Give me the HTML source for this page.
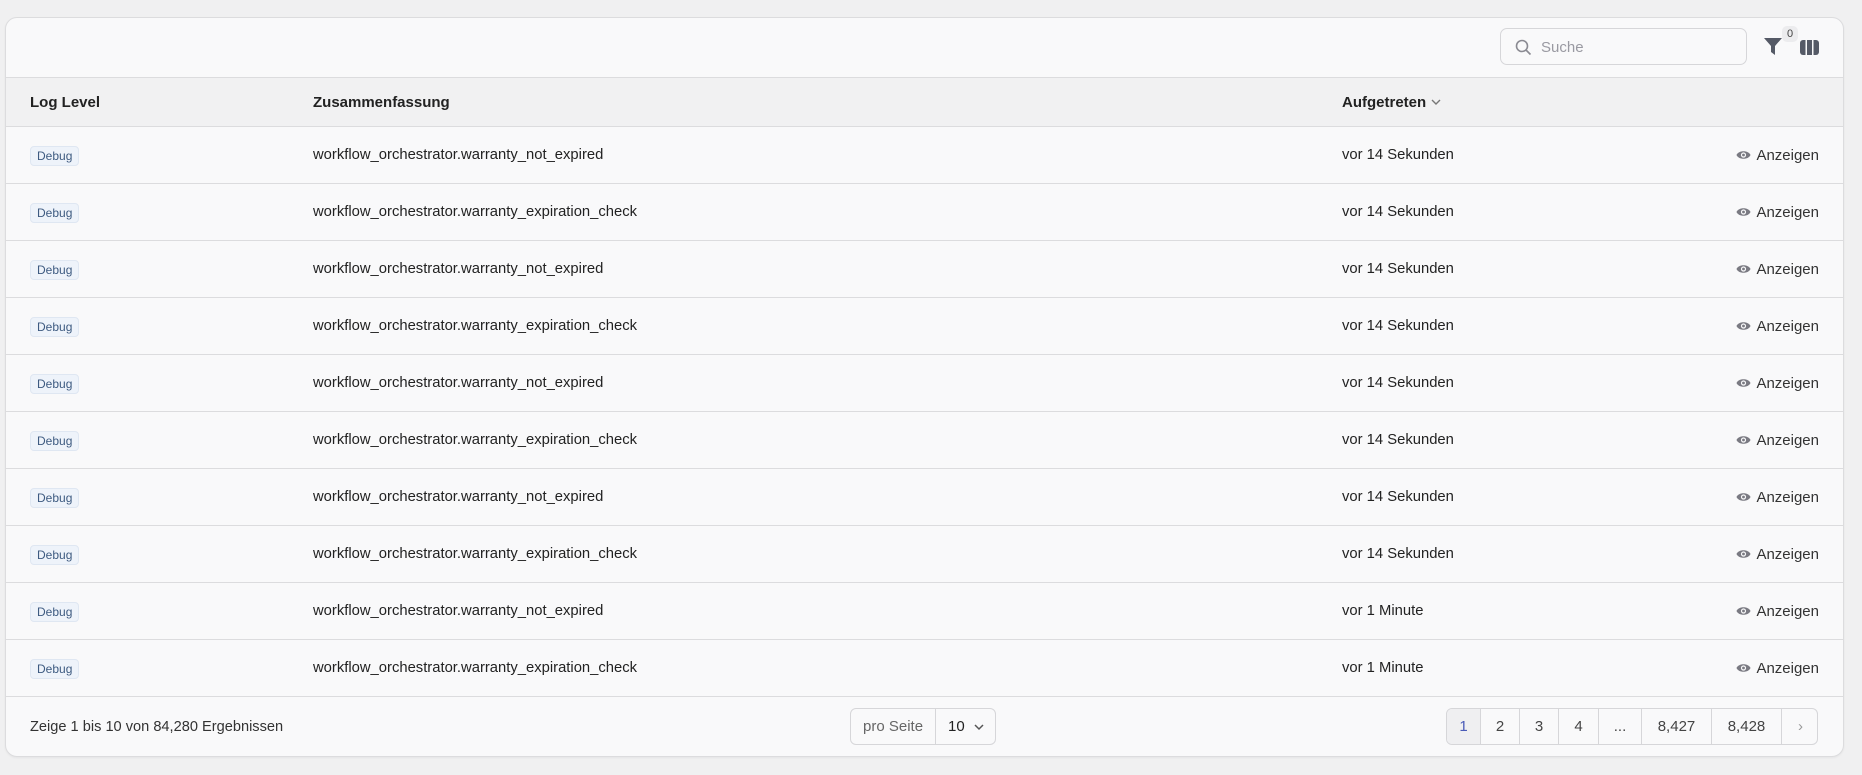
<!DOCTYPE html>
<html><head><meta charset="utf-8"><style>
*{box-sizing:border-box;margin:0;padding:0}
body{width:1862px;height:775px;background:#f0f0f1;font-family:"Liberation Sans",sans-serif;color:#222;position:relative;overflow:hidden}
.card{position:absolute;left:5px;top:17px;width:1839px;height:740px;background:#f9f9fa;border:1px solid #dcdcde;border-radius:12px;overflow:hidden;box-shadow:0 1px 2px rgba(0,0,0,.05)}
.search{position:absolute;left:1494px;top:10px;width:247px;height:37px;border:1px solid #d6d6d9;border-radius:7px;background:#f9f9fa}
.search span{position:absolute;left:40px;top:10px;font-size:15px;color:#9a9aa2}
.hdr{position:absolute;left:0;top:59px;width:100%;height:50px;background:#f1f1f2;border-top:1px solid #dcdcde;border-bottom:1px solid #dcdcde}
.hdr div{position:absolute;top:16px;font-size:15px;font-weight:bold;color:#222}
.row{position:absolute;left:0;width:100%;height:57px;border-bottom:1px solid #dcdcde}
.row .c{position:absolute;top:20px;font-size:14.8px;color:#222}
.badge{position:absolute;left:24px;top:19px;height:20px;padding:0 6px;font-size:12px;line-height:18px;color:#3d5a80;background:#eef3fa;border:1px solid #dfe7f2;border-radius:4px}
.view{position:absolute;right:24px;top:20px;font-size:15px;color:#333}
.view svg{vertical-align:-1px;margin-right:5px}
.foot{position:absolute;left:24px;top:701px;font-size:14.6px;color:#333}
.pp{position:absolute;left:844px;top:690px;width:146px;height:37px;border:1px solid #d6d6d9;border-radius:6px;font-size:15px}
.pg{position:absolute;left:1440px;top:690px;width:372px;height:37px;border:1px solid #d6d6d9;border-radius:6px;overflow:hidden;font-size:15px;color:#444}
.pg div{position:absolute;top:0;height:35px;line-height:35px;text-align:center;border-right:1px solid #d6d6d9}
</style></head><body>
<div class="card">
<div class="search"><svg style="position:absolute;left:14px;top:10px" width="17" height="17" viewBox="0 0 17 17" fill="none" stroke="#8a8a92" stroke-width="1.6"><circle cx="7" cy="7" r="5.5"/><path d="M11 11l4.5 4.5"/></svg><span>Suche</span></div>
<svg style="position:absolute;left:1757px;top:19px" width="20" height="19" viewBox="0 0 20 19"><path d="M1 1h18l-7 8v9l-4-3v-6z" fill="#555a66"/></svg>
<div style="position:absolute;left:1776px;top:8px;width:16px;height:16px;border-radius:5px;background:#ececee;font-size:11px;text-align:center;line-height:16px;color:#444">0</div>
<svg style="position:absolute;left:1794px;top:22px" width="19" height="15" viewBox="0 0 19 15"><rect x="0" y="0" width="19" height="15" rx="3" fill="#555a66"/><rect x="5.5" y="0" width="1.5" height="15" fill="#f9f9fa"/><rect x="12" y="0" width="1.5" height="15" fill="#f9f9fa"/></svg>
<div class="hdr"><div style="left:24px">Log Level</div><div style="left:307px">Zusammenfassung</div><div style="left:1336px">Aufgetreten <svg width="12" height="10" viewBox="0 0 12 10" fill="none" stroke="#777" stroke-width="1.4"><path d="M2 3l4 4 4-4"/></svg></div></div>
<div id="rows"></div>
<div class="foot">Zeige 1 bis 10 von 84,280 Ergebnissen</div>
<div class="pp"><span style="position:absolute;left:12px;top:9px;color:#666">pro Seite</span><div style="position:absolute;left:84px;top:0;height:35px;border-left:1px solid #d6d6d9"></div><span style="position:absolute;left:97px;top:9px">10</span><svg style="position:absolute;left:122px;top:13px" width="12" height="10" viewBox="0 0 12 10" fill="none" stroke="#555" stroke-width="1.5"><path d="M2 3l4 4 4-4"/></svg></div>
<div class="pg">
<div style="left:0;width:34px;background:#efeff1;color:#4a5bb8">1</div>
<div style="left:34px;width:39px">2</div>
<div style="left:73px;width:39px">3</div>
<div style="left:112px;width:40px">4</div>
<div style="left:152px;width:43px">...</div>
<div style="left:195px;width:70px">8,427</div>
<div style="left:265px;width:70px">8,428</div>
<div style="left:335px;width:37px;border:none;color:#999">›</div>
</div>
</div>
<script>
var t=["vor 14 Sekunden","vor 14 Sekunden","vor 14 Sekunden","vor 14 Sekunden","vor 14 Sekunden","vor 14 Sekunden","vor 14 Sekunden","vor 14 Sekunden","vor 1 Minute","vor 1 Minute"],h="";
for(var i=0;i<10;i++){var s=i%2?"workflow_orchestrator.warranty_expiration_check":"workflow_orchestrator.warranty_not_expired";
h+='<div class="row" style="top:'+(109+i*57)+'px"><span class="badge">Debug</span><span class="c" style="left:307px">'+s+'</span><span class="c" style="left:1336px">'+t[i]+'</span><span class="view"><svg width="15" height="12" viewBox="0 0 15 12"><path d="M0.5 6C2.5 1 12.5 1 14.5 6C12.5 11 2.5 11 0.5 6z" fill="#7a7a82"/><circle cx="7.5" cy="6" r="2.6" fill="#f9f9fa"/><circle cx="7.5" cy="6" r="1.4" fill="#7a7a82"/></svg>Anzeigen</span></div>';}
document.getElementById("rows").innerHTML=h;
</script>
</body></html>
